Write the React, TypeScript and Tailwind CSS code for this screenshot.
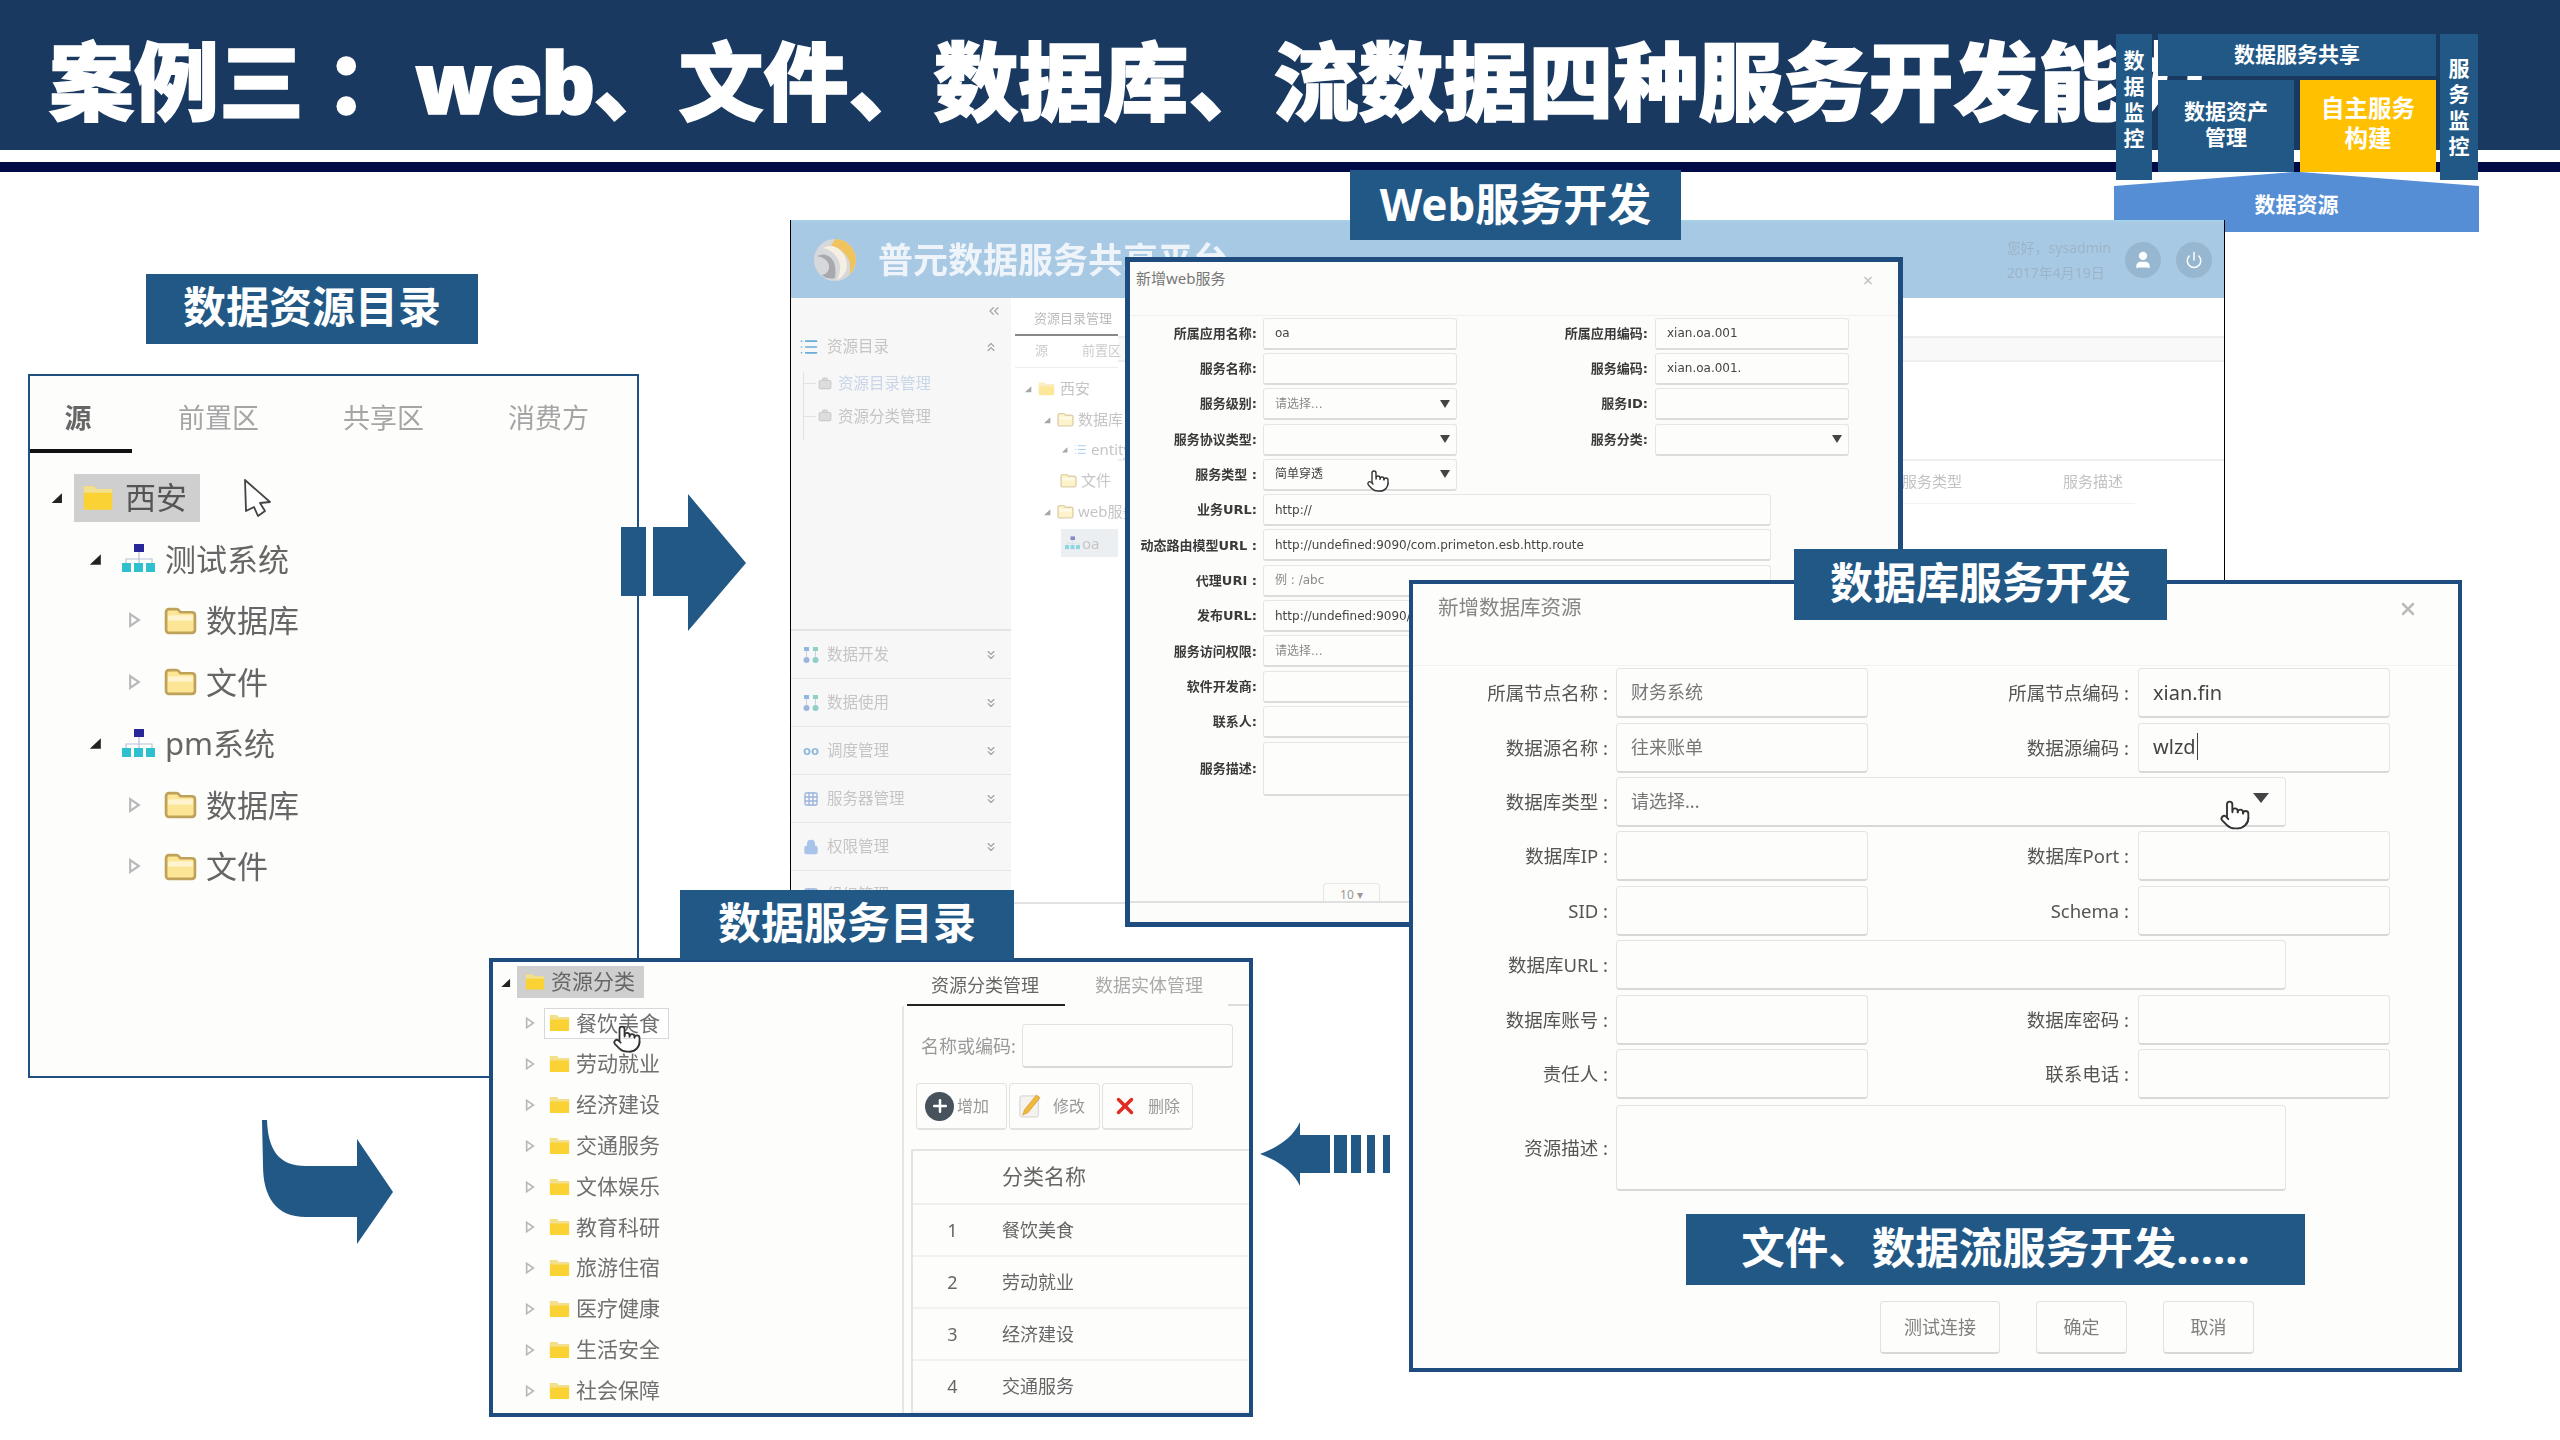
import React from 'react';
import { ChevronsDown, ChevronsLeft, ChevronsUp, List, Lock, Plus, Pointer, Power, User, X, Grid3x3, Briefcase } from 'lucide-react';

const cjk = "font-['Noto_Sans','Noto_Sans_CJK_SC',sans-serif]";
const dv = "font-['DejaVu_Sans','Noto_Sans_CJK_SC',sans-serif]";

function TriDown({ className }: { className: string }) {
  return <svg viewBox="0 0 12 12" className={className}><path d="M11 2V11H1.5Z" fill="#222" /></svg>;
}
function TriRight({ className }: { className: string }) {
  return <svg viewBox="0 0 12 14" className={className}><path d="M2 1.5L10 7L2 12.5Z" fill="#fff" stroke="#b9b9b9" strokeWidth="2" /></svg>;
}
function FolderSolid({ className }: { className: string }) {
  return (
    <svg viewBox="0 0 24 20" className={className}>
      <path d="M1 1h8l2 2h12v16H1z" fill="#fbd234" />
      <path d="M1 1h8l2 2h12v3H1z" fill="#f2e08f" />
    </svg>
  );
}
function FolderOutline({ className }: { className: string }) {
  return (
    <svg viewBox="0 0 32 28" className={className}>
      <path d="M2 6q0-3 3-3h7q2 0 3 2l1 1h11q3 0 3 3v14q0 3-3 3H5q-3 0-3-3z" fill="#fde596" stroke="#bfa25a" strokeWidth="2.6" />
      <path d="M4 9h24v5H4z" fill="#fff4cf" />
    </svg>
  );
}
function OrgIcon({ className }: { className: string }) {
  return (
    <svg viewBox="0 0 33 29" className={className}>
      <rect x="12" y="0" width="10" height="8" fill="#27279a" />
      <path d="M17 8v7M4 19v-4h26v4M17 15v4" stroke="#b8c4d8" strokeWidth="1.2" fill="none" />
      <rect x="0" y="19" width="9" height="9" fill="#2fc0d0" />
      <rect x="12" y="19" width="9" height="9" fill="#2fc0d0" />
      <rect x="24" y="19" width="9" height="9" fill="#2fc0d0" />
    </svg>
  );
}
function Hand({ className }: { className: string }) {
  return <Pointer className={className} fill="#fff" stroke="#333" strokeWidth={1.4} />;
}
function ArrowCursor({ className }: { className: string }) {
  return (
    <svg viewBox="0 0 30 40" className={className}>
      <path d="M3 2L28 24L18 25L23 33L16 38L12 29L4 33Z" fill="#fff" stroke="#444" strokeWidth="1.8" strokeLinejoin="round" />
    </svg>
  );
}

function Label({ className, children }: { className: string; children: React.ReactNode }) {
  return (
    <div className={`absolute z-40 flex items-center justify-center bg-[#215886] pb-[3px] text-white font-bold whitespace-nowrap ${cjk} ${className}`}>
      {children}
    </div>
  );
}

/* ---------- left panel: data resource catalogue ---------- */
function SourcePanel() {
  const tabs = ['前置区', '共享区', '消费方'];
  return (
    <div className={`absolute left-[28px] top-[374px] z-10 w-[611px] h-[704px] border-2 border-[#1f5082] bg-[#fdfdfc] ${cjk}`}>
      <div className="blur-[0.5px]">
        <div className="flex h-[77px] items-center pt-[8px] text-[27px]">
          <div className="w-[96px] text-center font-bold text-[#666]">源</div>
          <div className="w-[10px]" />
          {tabs.map((t) => (
            <div key={t} className="w-[165px] text-center text-[#a5a5a5]">{t}</div>
          ))}
        </div>
        <div className="h-[4px] w-[102px] bg-[#111] -mt-[4px]" />
        <div className="flex flex-col pt-[14px] text-[31px] text-[#666]">
          <div className="flex h-[61px] items-center pl-[20px]">
            <TriDown className="w-[13px] h-[13px]" />
            <div className="ml-[11px] flex h-[48px] w-[126px] items-center bg-[#cfcfcf] pl-[8px]">
              <FolderSolid className="w-[32px] h-[26px]" />
              <span className="ml-[11px] text-[#555]">西安</span>
            </div>
          </div>
          <div className="flex h-[61.5px] items-center pl-[58px]">
            <TriDown className="w-[14px] h-[14px]" />
            <OrgIcon className="ml-[20px] w-[33px] h-[29px]" />
            <span className="ml-[10px]">测试系统</span>
          </div>
          <div className="flex h-[61.5px] items-center pl-[98px]">
            <TriRight className="w-[13px] h-[16px]" />
            <FolderOutline className="ml-[23px] w-[33px] h-[29px]" />
            <span className="ml-[9px]">数据库</span>
          </div>
          <div className="flex h-[61.5px] items-center pl-[98px]">
            <TriRight className="w-[13px] h-[16px]" />
            <FolderOutline className="ml-[23px] w-[33px] h-[29px]" />
            <span className="ml-[9px]">文件</span>
          </div>
          <div className="flex h-[61.5px] items-center pl-[58px]">
            <TriDown className="w-[14px] h-[14px]" />
            <OrgIcon className="ml-[20px] w-[33px] h-[29px]" />
            <span className="ml-[10px]">pm系统</span>
          </div>
          <div className="flex h-[61.5px] items-center pl-[98px]">
            <TriRight className="w-[13px] h-[16px]" />
            <FolderOutline className="ml-[23px] w-[33px] h-[29px]" />
            <span className="ml-[9px]">数据库</span>
          </div>
          <div className="flex h-[61.5px] items-center pl-[98px]">
            <TriRight className="w-[13px] h-[16px]" />
            <FolderOutline className="ml-[23px] w-[33px] h-[29px]" />
            <span className="ml-[9px]">文件</span>
          </div>
        </div>
      </div>
      <ArrowCursor className="absolute left-[212px] top-[102px] w-[30px] h-[40px]" />
    </div>
  );
}

/* ---------- background platform window ---------- */
function SideRow({ icon, label }: { icon: React.ReactNode; label: string }) {
  return (
    <div className="flex h-[48px] shrink-0 items-center border-b border-[#e6e6e6] pl-[8px] pr-[13px]">
      <div className="flex w-[24px] justify-center">{icon}</div>
      <span className="ml-[4px] flex-1 text-[15.5px] text-[#c5c5c5]">{label}</span>
      <ChevronsDown className="w-[14px] h-[14px] text-[#9f9f9f]" />
    </div>
  );
}
function Dots() {
  return (
    <svg viewBox="0 0 18 18" className="w-[18px] h-[18px]">
      <rect x="2" y="1" width="5" height="4" fill="#8db9df" /><rect x="11" y="1" width="5" height="4" fill="#8fd0c8" />
      <path d="M4.5 5v6M13.5 5v6" stroke="#c8d4e0" />
      <circle cx="4.5" cy="14" r="3" fill="#9bb6dc" /><circle cx="13.5" cy="14" r="3" fill="#8fd0c8" />
    </svg>
  );
}
function Logo() {
  return (
    <svg viewBox="0 0 44 44" className="w-[44px] h-[44px] shrink-0">
      <circle cx="22" cy="22" r="21" fill="#d6d8dc" />
      <path d="M22 1a21 21 0 0 1 21 21q-1 10-7 15q4-13-5-22q-5-6-13-7z" fill="#f0c35c" />
      <path d="M10 10q10-5 18 3t5 20q-3 6-9 9q6-12 1-21q-5-9-15-11z" fill="#f6f0e2" />
      <path d="M4 18q8-4 14 2t4 20q-8 2-13-3q8-2 7-10q-2-7-12-9z" fill="#a7a9ae" />
    </svg>
  );
}
function PlatformWindow() {
  return (
    <div className={`absolute left-[790px] top-[220px] z-20 flex h-[738px] w-[1435px] flex-col border-x border-black bg-white ${cjk}`}>
      <div className="flex h-[78px] shrink-0 items-center border-t-2 border-[#a5d0e6] bg-[#a8c9e4] pl-[22px] pr-[12px]">
        <div className="blur-[0.5px] flex items-center">
          <Logo />
          <span className="ml-[21px] text-[35px] font-bold text-[#eef4fa]">普元数据服务共享平台</span>
        </div>
        <div className="ml-auto flex items-center blur-[0.5px]">
          <div className="mr-[14px] flex flex-col gap-[8px] text-[14px] leading-[17px] text-[#9cb4c9]">
            <span>您好，sysadmin</span>
            <span>2017年4月19日</span>
          </div>
          <div className="flex h-[36px] w-[36px] items-center justify-center rounded-full bg-[#97b7d0]"><User className="w-[20px] h-[20px] text-white" fill="#fff" /></div>
          <div className="ml-[15px] flex h-[36px] w-[36px] items-center justify-center rounded-full bg-[#97b7d0]"><Power className="w-[18px] h-[18px] text-white" /></div>
        </div>
      </div>
      <div className="flex flex-1 min-h-0">
        <div className="flex h-[607px] w-[220px] shrink-0 flex-col overflow-hidden bg-[#f7f7f7] blur-[0.4px]">
          <div className="flex h-[333px] shrink-0 flex-col border-b-2 border-[#e4e4e4]">
            <div className="flex justify-end pr-[9px] pt-[5px]"><ChevronsLeft className="w-[16px] h-[16px] text-[#aaa]" /></div>
            <div className="mt-[16px] flex items-center pl-[8px] pr-[13px]">
              <List className="w-[20px] h-[20px] text-[#69add8]" />
              <span className="ml-[8px] flex-1 text-[15.5px] text-[#c5c5c5]">资源目录</span>
              <ChevronsUp className="w-[14px] h-[14px] text-[#9f9f9f]" />
            </div>
            <div className="ml-[12px] mt-[14px] flex flex-col border-l border-[#e2e2e2] pb-[12px] mb-[-12px]">
              <div className="flex items-center text-[15.5px] text-[#c9d6e8]">
                <span className="w-[12px] border-t border-[#e2e2e2]" />
                <Briefcase className="ml-[2px] w-[14px] h-[14px] text-[#ccc]" fill="#ddd" />
                <span className="ml-[6px]">资源目录管理</span>
              </div>
              <div className="mt-[9px] flex items-center text-[15.5px] text-[#c5c5c5]">
                <span className="w-[12px] border-t border-[#e2e2e2]" />
                <Briefcase className="ml-[2px] w-[14px] h-[14px] text-[#ccc]" fill="#ddd" />
                <span className="ml-[6px]">资源分类管理</span>
              </div>
            </div>
          </div>
          <SideRow icon={<Dots />} label="数据开发" />
          <SideRow icon={<Dots />} label="数据使用" />
          <SideRow icon={<span className="text-[13px] font-bold leading-none text-[#8db9df]">oo</span>} label="调度管理" />
          <SideRow icon={<Grid3x3 className="w-[16px] h-[16px] text-[#9db4dc]" />} label="服务器管理" />
          <SideRow icon={<Lock className="w-[16px] h-[16px] text-[#a8c4e8]" fill="#a8c4e8" />} label="权限管理" />
          <SideRow icon={<Grid3x3 className="w-[16px] h-[16px] text-[#9db4dc]" />} label="组织管理" />
        </div>
        <div className="flex h-[606px] flex-1 flex-col border-b-2 border-[#e2e2e2]">
          <div className="flex flex-1">
            <div className="w-[107px] shrink-0 pl-[4px] blur-[0.4px]">
              <div className="h-[38px] border-b-2 border-[#888] pl-[19px] pt-[10px] text-[13px] leading-[20px] whitespace-nowrap text-[#bbb]">资源目录管理</div>
              <div className="flex h-[32px] gap-[34px] border-b border-[#eee] pl-[20px] pt-[5px] text-[13px] text-[#ccc]"><span>源</span><span className="whitespace-nowrap">前置区</span></div>
              <div className="flex h-[31px] items-center pl-[9px] pt-[10px] text-[15px] text-[#c5c5c5]">
                <TriDown className="w-[8px] h-[8px] opacity-40" />
                <FolderSolid className="ml-[6px] w-[17px] h-[14px] opacity-50" />
                <span className="ml-[5px]">西安</span>
              </div>
              <div className="flex h-[31px] items-center whitespace-nowrap pl-[28px] pt-[10px] text-[15px] text-[#c5c5c5]">
                <TriDown className="w-[8px] h-[8px] shrink-0 opacity-40" />
                <FolderOutline className="ml-[6px] w-[17px] h-[15px] shrink-0 opacity-50" />
                <span className="ml-[4px]">数据库</span>
              </div>
              <div className="flex h-[31px] items-center whitespace-nowrap pl-[46px] pt-[8px] text-[15px] text-[#c5c5c5]">
                <TriDown className="w-[7px] h-[7px] shrink-0 opacity-40" />
                <List className="ml-[6px] w-[13px] h-[13px] shrink-0 text-[#a9cdf0]" />
                <span className="ml-[4px]">entity</span>
              </div>
              <div className="flex h-[31px] items-center whitespace-nowrap pl-[45px] pt-[8px] text-[15px] text-[#c5c5c5]">
                <FolderOutline className="w-[17px] h-[15px] shrink-0 opacity-50" />
                <span className="ml-[4px]">文件</span>
              </div>
              <div className="flex h-[31px] items-center whitespace-nowrap pl-[28px] pt-[8px] text-[15px] text-[#c5c5c5]">
                <TriDown className="w-[8px] h-[8px] shrink-0 opacity-40" />
                <FolderOutline className="ml-[6px] w-[17px] h-[15px] shrink-0 opacity-50" />
                <span className="ml-[4px]">web服务</span>
              </div>
              <div className="ml-[46px] mt-[6px] flex h-[28px] items-center bg-[#eceff2] pl-[4px] text-[15px] text-[#c5c5c5]">
                <OrgIcon className="w-[15px] h-[14px] shrink-0 opacity-50" />
                <span className="ml-[2px]">oa</span>
              </div>
            </div>
            <div className="flex-1">
              <div className="h-[40px] border-b-2 border-[#eeeeee]" />
              <div className="h-[24px] border-b-2 border-[#eeeeee] bg-[#f9f9f9]" />
              <div className="h-[99px] border-b-2 border-[#eeeeee]" />
              <div className="flex pl-[784px] pt-[10px] text-[15px] leading-[20px] text-[#c2c2c2] blur-[0.4px]">
                <span className="w-[161px] pb-[12px] border-b border-[#f2f2f2]">服务类型</span>
                <span className="w-[72px] pb-[12px] border-b border-[#f2f2f2]">服务描述</span>
              </div>
            </div>
          </div>
        </div>
      </div>
    </div>
  );
}

/* ---------- web service modal ---------- */
const fieldBox = 'flex items-center rounded-[3px] border border-[#e6e6e6] border-b-2 border-b-[#dcdcdc] bg-[#fdfdfc] pl-[11px] pr-[6px] text-[12px] whitespace-nowrap overflow-hidden';

function WebRow(p: { label: string; value?: string; select?: boolean; wide?: boolean; muted?: boolean; rlabel?: string; rvalue?: string; rselect?: boolean; tall?: boolean }) {
  return (
    <div className={`flex items-center ${p.tall ? 'h-[58px]' : 'h-[35.3px]'}`}>
      <div className="w-[127px] shrink-0 text-right text-[13px] font-bold whitespace-nowrap text-[#3a3a3a]">{p.label}</div>
      <div className={`ml-[6px] ${p.wide ? 'w-[508px]' : 'w-[194px]'} ${p.tall ? 'h-[54px]' : 'h-[32px]'} justify-between ${fieldBox} ${p.muted ? 'text-[#8a8a8a]' : 'text-[#444]'}`}>
        <span>{p.value}</span>
        {p.select && <span className="h-0 w-0 border-x-[5px] border-t-[8px] border-x-transparent border-t-[#444]" />}
      </div>
      {p.rlabel && <div className="w-[191px] shrink-0 text-right text-[13px] font-bold whitespace-nowrap text-[#3a3a3a]">{p.rlabel}</div>}
      {p.rlabel && (
        <div className={`ml-[7px] w-[194px] h-[32px] justify-between text-[#444] ${fieldBox}`}>
          <span>{p.rvalue}</span>
          {p.rselect && <span className="h-0 w-0 border-x-[5px] border-t-[8px] border-x-transparent border-t-[#444]" />}
        </div>
      )}
    </div>
  );
}

function WebModal() {
  return (
    <div className={`absolute left-[1125px] top-[257px] z-30 flex h-[670px] w-[778px] flex-col border-[5px] border-[#1f4c7e] bg-[#fcfcfa] ${cjk}`}>
      <div className="flex h-[54px] shrink-0 items-start justify-between border-b border-[#f1f1f1] pl-[6px] pr-[25px] pt-[5px]">
        <span className="text-[15px] leading-[22px] text-[#777]">新增web服务</span>
        <span className="text-[18px] leading-[26px] text-[#c0c0c0]">×</span>
      </div>
      <div className={`blur-[0.25px] ${dv}`}>
        <WebRow label="所属应用名称:" value="oa" rlabel="所属应用编码:" rvalue="xian.oa.001" />
        <WebRow label="服务名称:" rlabel="服务编码:" rvalue="xian.oa.001." />
        <WebRow label="服务级别:" value="请选择..." muted select rlabel="服务ID:" />
        <WebRow label="服务协议类型:" select rlabel="服务分类:" rselect />
        <WebRow label="服务类型 :" value="简单穿透" select />
        <WebRow label="业务URL:" value="http://" wide />
        <WebRow label="动态路由模型URL :" value="http://undefined:9090/com.primeton.esb.http.route" wide />
        <WebRow label="代理URI :" value="例 : /abc" muted wide />
        <WebRow label="发布URL:" value="http://undefined:9090/" wide />
        <WebRow label="服务访问权限:" value="请选择..." muted wide />
        <WebRow label="软件开发商:" wide />
        <WebRow label="联系人:" wide />
        <WebRow label="服务描述:" wide tall />
      </div>
      <div className="mt-auto pb-[19px]">
        <div className="ml-[193px] flex h-[18px] w-[57px] items-end justify-center rounded-t border-x border-t border-[#e6e6e6] text-[12px] leading-[13px] text-[#999]">10 ▾</div>
        <div className="h-[2px] bg-[#e0e0e0]" />
      </div>
      <Hand className="absolute left-[236px] top-[206px] w-[24px] h-[26px]" />
    </div>
  );
}

/* ---------- database modal ---------- */
const dbBox = 'rounded-[4px] border border-[#e4e4e4] border-b-2 border-b-[#d8d8d8] bg-[#fdfdfc] px-[14px] whitespace-nowrap flex items-center justify-between';

function DbRow(p: { label: string; value?: string; wide?: boolean; rlabel?: string; rvalue?: React.ReactNode; dark?: boolean; tall?: boolean; select?: boolean }) {
  return (
    <div className={`flex items-center ${p.tall ? 'h-[94px]' : 'h-[54.4px]'}`}>
      <div className="w-[195px] shrink-0 text-right text-[18.5px] whitespace-nowrap text-[#555]">{p.label}</div>
      <div className={`ml-[8px] ${p.wide ? 'w-[670px]' : 'w-[252px]'} ${p.tall ? 'h-[86px]' : 'h-[50px]'} text-[18px] text-[#777] ${dbBox}`}>
        <span>{p.value}</span>
        {p.select && <span className="mb-[6px] mr-[2px] h-0 w-0 border-x-[8px] border-t-[10px] border-x-transparent border-t-[#444]" />}
      </div>
      {p.rlabel && <div className="w-[261px] shrink-0 text-right text-[18.5px] whitespace-nowrap text-[#555]">{p.rlabel}</div>}
      {p.rlabel && <div className={`ml-[9px] w-[252px] h-[50px] text-[20px] text-[#444] ${dbBox} ${p.dark ? 'border-[#c9c9c9] border-b-[#8f8f8f]' : ''}`}><span>{p.rvalue}</span></div>}
    </div>
  );
}

function DbModal() {
  return (
    <div className={`absolute left-[1409px] top-[580px] z-30 flex h-[792px] w-[1053px] flex-col border-[4px] border-[#1f4c7e] bg-[#fdfdfb] ${cjk}`}>
      <div className="flex h-[82px] shrink-0 items-start justify-between border-b border-[#f2f2f2] pl-[25px] pr-[40px] pt-[8px]">
        <span className="text-[20.5px] leading-[30px] text-[#858585] blur-[0.3px]">新增数据库资源</span>
        <X className="mt-[7px] w-[20px] h-[20px] text-[#bbbbbb]" strokeWidth={3} />
      </div>
      <div className="blur-[0.3px]">
        <DbRow label="所属节点名称 :" value="财务系统" rlabel="所属节点编码 :" rvalue="xian.fin" />
        <DbRow label="数据源名称 :" value="往来账单" rlabel="数据源编码 :" rvalue={<span>wlzd<span className="ml-[1px] border-l border-[#444]" /></span>} dark />
        <DbRow label="数据库类型 :" value="请选择..." wide select />
        <DbRow label="数据库IP :" rlabel="数据库Port :" />
        <DbRow label="SID :" rlabel="Schema :" />
        <DbRow label="数据库URL :" wide />
        <DbRow label="数据库账号 :" rlabel="数据库密码 :" />
        <DbRow label="责任人 :" rlabel="联系电话 :" />
        <DbRow label="资源描述 :" wide tall />
      </div>
      <div className="mt-auto flex h-[53px] justify-start gap-[36px] pl-[467px] mb-[14px] text-[18px] text-[#808080] blur-[0.3px]">
        <div className="flex w-[120px] items-center justify-center rounded-[4px] border border-[#e2e2e2] border-b-2 border-b-[#d8d8d8]">测试连接</div>
        <div className="flex w-[91px] items-center justify-center rounded-[4px] border border-[#e2e2e2] border-b-2 border-b-[#d8d8d8]">确定</div>
        <div className="flex w-[91px] items-center justify-center rounded-[4px] border border-[#e2e2e2] border-b-2 border-b-[#d8d8d8]">取消</div>
      </div>
      <Hand className="absolute left-[806px] top-[212px] w-[32px] h-[38px]" />
    </div>
  );
}

/* ---------- data service catalogue panel ---------- */
const categories = ['餐饮美食', '劳动就业', '经济建设', '交通服务', '文体娱乐', '教育科研', '旅游住宿', '医疗健康', '生活安全', '社会保障'];
const tableRows = ['餐饮美食', '劳动就业', '经济建设', '交通服务'];

function ServicePanel() {
  return (
    <div className={`absolute left-[489px] top-[958px] z-30 flex h-[459px] w-[764px] overflow-hidden border-[4px] border-[#1f4c7e] bg-[#fdfdfc] ${cjk}`}>
      <div className="w-[409px] shrink-0 blur-[0.4px]">
        <div className="flex h-[38px] items-center pl-[7px] pt-[2px]">
          <TriDown className="w-[11px] h-[11px]" />
          <div className="ml-[6px] flex h-[32px] w-[127px] items-center bg-[#cfcfcf] pl-[8px]">
            <FolderSolid className="w-[20px] h-[24px]" />
            <span className="ml-[6px] text-[21px] text-[#666]">资源分类</span>
          </div>
        </div>
        <div className="flex flex-col pt-[3px]">
          {categories.map((c, i) => (
            <div key={c} className="flex h-[40.8px] items-center pl-[32px]">
              <TriRight className="w-[10px] h-[14px]" />
              <div className={`ml-[9px] flex h-[31px] w-[125px] items-center border pl-[4px] ${i === 0 ? 'border-[#d8d8d8] bg-white' : 'border-transparent'}`}>
                <FolderSolid className="w-[21px] h-[22px]" />
                <span className="ml-[6px] text-[21px] whitespace-nowrap text-[#707070]">{c}</span>
              </div>
            </div>
          ))}
        </div>
      </div>
      <div className="flex flex-1 flex-col overflow-hidden pt-[8px]">
        <div className="flex h-[50px] items-center pb-[4px] text-[18px] blur-[0.3px]">
          <span className="ml-[29px] text-[#666]">资源分类管理</span>
          <span className="ml-[56px] text-[#aaa]">数据实体管理</span>
        </div>
        <div className="flex h-[3px]">
          <div className="ml-[5px] w-[158px] bg-[#222]" />
          <div className="ml-[163px] flex-1 bg-[#ddd]" />
        </div>
        <div className="flex-1 border-l-2 border-[#e6e6e6]">
          <div className="mt-[18px] flex h-[44px] items-center pl-[17px]">
            <span className="text-[18px] text-[#999] blur-[0.3px]">名称或编码:</span>
            <div className="ml-[6px] h-[44px] w-[211px] rounded-[4px] border border-[#e2e2e2] border-b-2 border-b-[#d8d8d8]" />
          </div>
          <div className="mt-[15px] flex h-[47px] gap-[2px] pl-[12px] text-[16px] text-[#999] blur-[0.3px]">
            <div className="flex w-[91px] items-center rounded-[4px] border border-[#e2e2e2] border-b-2 pl-[8px]">
              <span className="flex h-[29px] w-[29px] items-center justify-center rounded-full bg-[#47525c]"><Plus className="w-[20px] h-[20px] text-white" strokeWidth={3} /></span>
              <span className="ml-[3px]">增加</span>
            </div>
            <div className="flex w-[91px] items-center rounded-[4px] border border-[#e2e2e2] border-b-2 pl-[9px]">
              <svg viewBox="0 0 24 28" className="w-[22px] h-[26px]">
                <rect x="1" y="3" width="20" height="23" rx="2" fill="#f6f3ee" stroke="#cfcfcf" />
                <path d="M19 2l4 3L10 21l-6 3 2-6z" fill="#f0b93a" stroke="#c98a2a" strokeWidth=".6" />
              </svg>
              <span className="ml-[12px]">修改</span>
            </div>
            <div className="flex w-[91px] items-center rounded-[4px] border border-[#e2e2e2] border-b-2 pl-[9px]">
              <X className="w-[26px] h-[26px] text-[#e02c22]" strokeWidth={3.2} />
              <span className="ml-[10px]">删除</span>
            </div>
          </div>
          <div className="mt-[19px] ml-[7px] border-l-2 border-t-2 border-[#e4e4e4]">
            <div className="flex h-[54px] items-center border-b-2 border-[#efefef] pl-[89px] text-[21px] text-[#666] blur-[0.3px]">分类名称</div>
            {tableRows.map((r, i) => (
              <div key={r} className="flex h-[52px] items-center border-b-2 border-[#f2f2f2] text-[18px] text-[#666] blur-[0.3px]">
                <span className="w-[89px] pr-[10px] text-center">{i + 1}</span>
                <span>{r}</span>
              </div>
            ))}
          </div>
        </div>
      </div>
      <Hand className="absolute left-[119px] top-[60px] w-[30px] h-[34px]" />
    </div>
  );
}

/* ---------- module map top right ---------- */
function ModuleMap() {
  const bar = 'bg-[#215886] text-white font-bold';
  const col = `${bar} flex flex-col items-center justify-center text-[21px] leading-[26px]`;
  return (
    <div className={`absolute left-[2114px] top-[34px] z-10 flex h-[198px] w-[365px] flex-col ${cjk}`}>
      <div className="relative z-10 flex h-[146px] pl-[2px]">
        <div className={`${col} w-[36px] pb-[16px]`}><span>数</span><span>据</span><span>监</span><span>控</span></div>
        <div className="ml-[6px] flex w-[278px] flex-col">
          <div className={`${bar} flex h-[42px] items-center justify-center text-[21px]`}>数据服务共享</div>
          <div className="mt-[4px] flex h-[92px] gap-[6px]">
            <div className={`${bar} flex w-[136px] flex-col items-center justify-center pb-[4px] text-[21px] leading-[26px]`}><span>数据资产</span><span>管理</span></div>
            <div className="flex w-[136px] flex-col items-center justify-center bg-[#ffc000] pb-[6px] text-[23.5px] font-bold leading-[30px] text-white"><span>自主服务</span><span>构建</span></div>
          </div>
        </div>
        <div className={`${col} ml-[4px] w-[38px]`}><span>服</span><span>务</span><span>监</span><span>控</span></div>
      </div>
      <div className="-mt-[8px] flex h-[60px] items-center justify-center bg-[#558ed5] pt-[6px] text-[21px] font-bold text-white [clip-path:polygon(0_14px,180px_0,186px_0,100%_14px,100%_100%,0_100%)]">数据资源</div>
    </div>
  );
}

export default function App() {
  return (
    <div className="relative h-[1440px] w-[2560px] overflow-hidden bg-white">
      <header className={`h-[150px] bg-[#1a3961] pl-[49px] pt-[18px] text-[85px] font-black leading-[126px] whitespace-nowrap text-white [-webkit-text-stroke:1.5px_white] ${cjk}`}>
        案例三<span className="ml-[21px]">：</span><span className="ml-[5px] tracking-[-2px]">web</span>、文件、数据库、流数据四种服务开发能力
      </header>
      <div className="mt-[12px] h-[10px] bg-[#000a46]" />

      <ModuleMap />
      <Label className="left-[146px] top-[274px] h-[70px] w-[332px] text-[43px]">数据资源目录</Label>
      <SourcePanel />

      <svg viewBox="0 0 125 138" className="absolute left-[621px] top-[494px] z-20 w-[125px] h-[138px]">
        <path d="M0 33h25v69H0zM32 33h35V0l58 69-58 68v-35H32z" fill="#215886" />
      </svg>

      <PlatformWindow />
      <WebModal />
      <DbModal />
      <Label className="left-[1350px] top-[170px] h-[70px] w-[331px] text-[44px]">Web服务开发</Label>
      <Label className="left-[1794px] top-[549px] h-[71px] w-[373px] text-[43px]">数据库服务开发</Label>
      <Label className="left-[1686px] top-[1214px] h-[71px] w-[619px] text-[43.5px]">文件、数据流服务开发......</Label>
      <Label className="left-[680px] top-[890px] h-[70px] w-[334px] text-[43px]">数据服务目录</Label>

      <ServicePanel />

      <svg viewBox="0 0 132 126" className="absolute left-[262px] top-[1119px] w-[132px] h-[126px]">
        <path d="M0 1h5C6 30 16 47 44 47H95V20L131 73 95 125V98H44C14 98 1 78 1 46Z" fill="#215886" />
      </svg>
      <svg viewBox="0 0 132 66" className="absolute left-[1259px] top-[1121px] z-30 w-[132px] h-[66px]">
        <path d="M1 33C20 26 34 16 41 1V14H71V52H41V65C34 50 20 40 1 33Z" fill="#215886" />
        <rect x="75" y="14" width="13" height="38" fill="#215886" />
        <rect x="92" y="14" width="10" height="38" fill="#215886" />
        <rect x="108" y="14" width="8" height="38" fill="#215886" />
        <rect x="124" y="14" width="7" height="38" fill="#215886" />
      </svg>
    </div>
  );
}
